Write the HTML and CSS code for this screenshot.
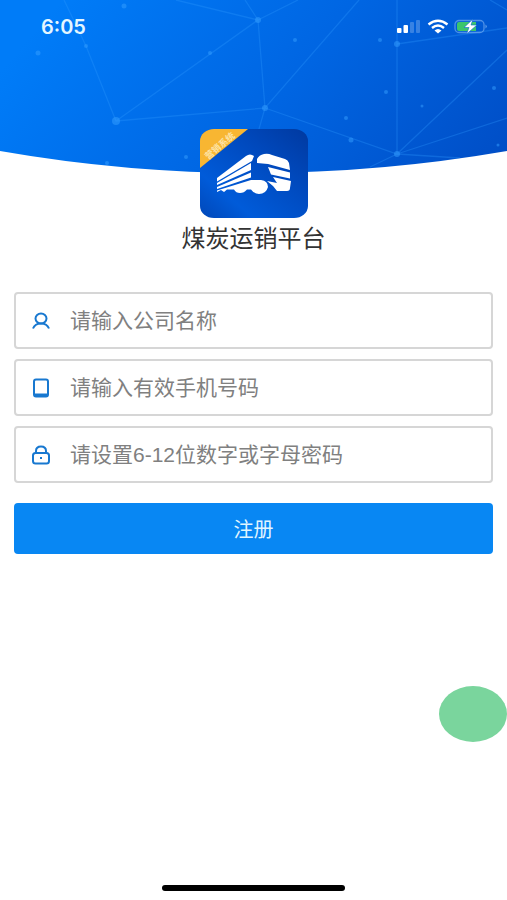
FILE: index.html
```html
<!DOCTYPE html>
<html lang="zh-CN">
<head>
<meta charset="utf-8">
<meta name="viewport" content="width=device-width, initial-scale=1">
<title>煤炭运销平台</title>
<link rel="stylesheet" href="styles.css">
</head>
<body>
<div class="page">
  <header class="hero">
    <svg class="hero-bg" viewBox="0 0 507 174" preserveAspectRatio="none" aria-hidden="true">
      <defs>
        <linearGradient id="sky" gradientUnits="userSpaceOnUse" x1="60" y1="0" x2="420" y2="300">
          <stop offset="0" stop-color="#007cf8"/>
          <stop offset=".5" stop-color="#0065e2"/>
          <stop offset="1" stop-color="#004bc3"/>
        </linearGradient>
        <clipPath id="curve"><path d="M0 0H507V151Q380 173 253 173T0 151Z"/></clipPath>
      </defs>
      <g clip-path="url(#curve)">
        <rect width="507" height="174" fill="url(#sky)"/>
        <g fill="none" stroke="#2f9bff" stroke-opacity=".3" stroke-width="1.3">
          <path d="M64 0L86 46L116 121L258 20L298 0M116 121L265 108L253 150M176 0L258 20L265 108L359 0M258 20L245 0M265 108L397 154V0M397 44L507 28M397 154L507 50M397 154L507 118M397 154L460 158M397 154L370 167M490 0L507 10"/>
        </g>
        <g fill="#35a0ff" fill-opacity=".5">
          <circle cx="116" cy="121" r="4"/><circle cx="258" cy="20" r="3"/><circle cx="265" cy="108" r="3"/>
          <circle cx="397" cy="44" r="3"/><circle cx="397" cy="154" r="3"/><circle cx="38" cy="53" r="2.5"/>
          <circle cx="124" cy="6" r="2.5"/><circle cx="86" cy="46" r="2"/><circle cx="210" cy="53" r="2"/>
          <circle cx="295" cy="40" r="2"/><circle cx="380" cy="40" r="2"/><circle cx="386" cy="92" r="2"/>
          <circle cx="346" cy="118" r="2"/><circle cx="422" cy="106" r="1.5"/><circle cx="494" cy="88" r="2"/>
          <circle cx="351" cy="140" r="2.5"/><circle cx="186" cy="157" r="2"/><circle cx="107" cy="163" r="2"/>
          <circle cx="498" cy="145" r="1.5"/>
        </g>
      </g>
    </svg>
    <div class="status">
      <span class="time">6:05</span>
      <svg class="status-icons" viewBox="0 0 90 16" role="img" aria-label="信号、无线网络、充电中">
        <g fill="#fff">
          <rect y="9" width="4.500" height="5" rx="1"/><rect x="6.500" y="6" width="4.500" height="8" rx="1"/>
          <rect x="13" y="3" width="4" height="11" rx="1" opacity=".22"/><rect x="19" y="1" width="4" height="13" rx="1" opacity=".22"/>
        </g>
        <g fill="none" stroke="#fff" stroke-width="2.400">
          <path d="M31.500 5.500Q41 -2 50.500 5.500M35 9Q41 4 47 9"/>
        </g>
        <path d="M37.500 11.500Q41 8.500 44.500 11.500L41 14.500Z" fill="#fff"/>
        <rect x="58" y="1.500" width="29" height="12" rx="4" fill="none" stroke="#8fc0f5" stroke-opacity=".55" stroke-width="1.300"/>
        <path d="M62 3H79V12H62Q60 12 60 10V5Q60 3 62 3Z" fill="#3cc56b"/>
        <path d="M88.500 5.500Q91 7.500 88.500 9.500Z" fill="#8fc0f5" opacity=".7"/>
        <path d="M76 0L67 8.500H72L69.500 15L80 6H74Z" fill="#fff" stroke="#0866d2" stroke-width=".6"/>
      </svg>
    </div>
    <svg class="logo" viewBox="0 0 108 89" role="img" aria-label="煤炭运销平台">
      <defs>
        <linearGradient id="tile" x1="1" y1="0" x2="0" y2="1">
          <stop offset="0" stop-color="#0039a0"/><stop offset=".35" stop-color="#0049bd"/><stop offset=".75" stop-color="#005bd9"/><stop offset="1" stop-color="#0047b8"/>
        </linearGradient>
        <clipPath id="round"><rect width="108" height="89" rx="14" ry="12"/></clipPath>
      </defs>
      <g clip-path="url(#round)">
        <rect width="108" height="89" fill="url(#tile)"/>
        <path d="M0 0H48L0 39Z" fill="#f8b632"/>
        <text class="ribbon" x="20" y="20" transform="rotate(-40 20 17)">营销系统</text>
      </g>
      <g fill="#fff">
        <path d="M17 49L46 27Q50 24 54 27L52 32L17 52.500Z"/>
        <path d="M17 54L51 34V41L17 56Z"/>
        <path d="M17 58L51 43.500V48.500L17 60Z"/>
        <path d="M17 61.500L51 51H61Q68 52 68 58Q66 65 59 65Q53 64 51 60.500H47Q44 64 40 64Q36 64 34 60.500H27L24 63L21 61L17 63Z"/>
        <path d="M57 34V30Q59 26 64 25Q68 24 72 26L85 30Q88 31 89 34L90 41L68 35Z"/>
        <path d="M68 38L90 43.500V49.500L71 45.500Z"/>
        <path d="M73 48L91 52L90 59Q90 62 87 62H77L73 57L67 52L77 54Z"/>
      </g>
    </svg>
    <h1 class="title">煤炭运销平台</h1>
  </header>
  <main>
    <form class="form">
      <label class="field">
        <svg class="icon" viewBox="0 0 18 20" aria-hidden="true"><ellipse cx="9" cy="7.500" rx="5.500" ry="5"/><path d="M1 17.500Q3 12.500 9 12.500T17 17.500"/></svg>
        <input type="text" placeholder="请输入公司名称" aria-label="公司名称">
      </label>
      <label class="field">
        <svg class="icon" viewBox="0 0 18 20" aria-hidden="true"><rect x="2" y="1.500" width="14" height="17" rx="2"/><path d="M2 17H16" stroke-width="3"/></svg>
        <input type="tel" placeholder="请输入有效手机号码" aria-label="手机号码">
      </label>
      <label class="field">
        <svg class="icon" viewBox="0 0 18 20" aria-hidden="true"><rect x="1" y="8" width="16" height="10.500" rx="2.500"/><path d="M4 8V6Q4 1.500 9 1.500T14 6V8M8 13H10"/></svg>
        <input type="password" placeholder="请设置6-12位数字或字母密码" aria-label="密码">
      </label>
      <button class="submit" type="submit">注册</button>
    </form>
  </main>
  <button class="float" type="button" aria-label="悬浮按钮"></button>
  <div class="home"></div>
</div>
</body>
</html>
```
FILE: styles.css
```css
* { box-sizing: border-box; }

body {
  margin: 0;
  background: #fff;
  font-family: "Liberation Sans", "Noto Sans CJK SC", sans-serif;
}

.page {
  position: relative;
  display: flex;
  flex-direction: column;
  min-height: 100vh;
  overflow: hidden;
}

.hero {
  position: relative;
  display: flex;
  flex-direction: column;
  align-items: center;
}

.hero-bg {
  position: absolute;
  top: 0;
  left: 0;
  width: 100%;
  height: 174px;
}

.status {
  position: relative;
  display: flex;
  align-items: center;
  justify-content: space-between;
  width: 100%;
  height: 53px;
  padding: 0 20px 0 41px;
}

.time {
  color: #e4f6ff;
  font: 600 20px/24px Inter, sans-serif;
}

.status-icons { width: 90px; height: 16px; }

.logo {
  position: relative;
  width: 108px;
  height: 89px;
  margin-top: 76px;
}

.ribbon {
  fill: #fde3a4;
  font-size: 9px;
  font-weight: 700;
  text-anchor: middle;
}

.title {
  margin: 4px 0 0;
  color: #333;
  font-size: 24px;
  font-weight: 400;
  line-height: 34px;
}

.form {
  display: flex;
  flex-direction: column;
  gap: 10px;
  padding: 36px 14px 0;
}

.field {
  display: flex;
  align-items: center;
  gap: 20px;
  height: 57px;
  padding: 0 16px;
  border: 2px solid #d6d6d6;
  border-radius: 4px;
}

.icon {
  flex: none;
  width: 18px;
  height: 20px;
  fill: none;
  stroke: #1878d0;
  stroke-width: 2;
}

.field input {
  flex: 1;
  min-width: 0;
  padding: 0;
  border: 0;
  outline: 0;
  background: none;
  color: #333;
  font: inherit;
  font-size: 21px;
  line-height: 32px;
}

.field input::placeholder { color: #808080; opacity: 1; }

.submit {
  height: 51px;
  margin-top: 10px;
  padding: 0;
  border: 0;
  border-radius: 4px;
  background: #0887f3;
  color: #e0f5ff;
  font: inherit;
  font-size: 20px;
}

.float {
  position: absolute;
  right: 0;
  bottom: 158px;
  width: 68px;
  height: 56px;
  padding: 0;
  border: 0;
  border-radius: 50%;
  background: #7ad59d;
}

.home {
  width: 36%;
  height: 6px;
  margin: auto auto 9px;
  border-radius: 3px;
  background: #000;
}
```
